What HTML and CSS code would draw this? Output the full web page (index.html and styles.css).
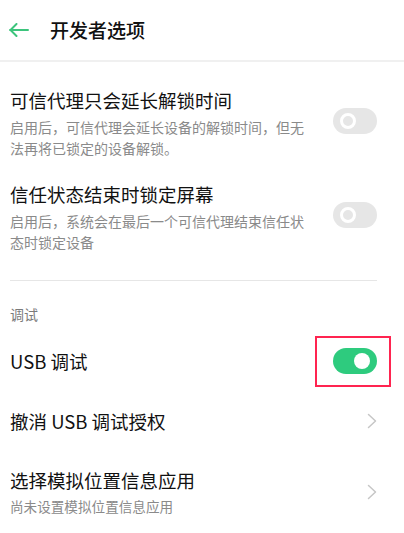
FILE: index.html
```html
<!DOCTYPE html>
<html lang="zh-CN">
<head>
<meta charset="utf-8">
<link rel="stylesheet" href="styles.css">
</head>
<body>
<header class="header">
  <svg class="back" width="20" height="14" viewBox="0 0 20 14"><path d="M1 7H19M7.5 1L1.5 7L7.5 13" fill="none" stroke="#3cc47c" stroke-width="2" stroke-linecap="round" stroke-linejoin="round"/></svg>
  <h1 class="title">开发者选项</h1>
</header>
<main class="list">
  <div class="item">
    <div class="text">
      <div class="item-title">可信代理只会延长解锁时间</div>
      <div class="item-sub">启用后，可信代理会延长设备的解锁时间，但无法再将已锁定的设备解锁。</div>
    </div>
    <div class="toggle off top"><span class="knob"></span></div>
  </div>
  <div class="item">
    <div class="text">
      <div class="item-title">信任状态结束时锁定屏幕</div>
      <div class="item-sub">启用后，系统会在最后一个可信代理结束信任状态时锁定设备</div>
    </div>
    <div class="toggle off top"><span class="knob"></span></div>
  </div>
  <div class="divider"></div>
  <div class="sec-label">调试</div>
  <div class="row">
    <div class="item-title">USB 调试</div>
    <div class="highlight">
      <div class="toggle on"><span class="knob"></span></div>
    </div>
  </div>
  <div class="row">
    <div class="item-title">撤消 USB 调试授权</div>
    <svg class="chev" width="10" height="16" viewBox="0 0 10 16"><path d="M1.5 1.5L8.5 8L1.5 14.5" fill="none" stroke="#c6c6c6" stroke-width="1.5" stroke-linecap="round" stroke-linejoin="round"/></svg>
  </div>
  <div class="item last">
    <div class="text">
      <div class="item-title">选择模拟位置信息应用</div>
      <div class="item-sub small">尚未设置模拟位置信息应用</div>
    </div>
    <svg class="chev" width="10" height="16" viewBox="0 0 10 16"><path d="M1.5 1.5L8.5 8L1.5 14.5" fill="none" stroke="#c6c6c6" stroke-width="1.5" stroke-linecap="round" stroke-linejoin="round"/></svg>
  </div>
</main>
</body>
</html>
```
FILE: styles.css
```css
* { box-sizing: border-box; }
html, body { margin: 0; padding: 0; background: #fff; }
body {
  font-family: "Noto Sans CJK SC", "Noto Sans", sans-serif;
  color: #111;
  width: 404px;
  height: 533px;
  overflow: hidden;
}
.header {
  height: 62px;
  display: flex;
  align-items: center;
  padding: 0 0 1px 9px;
  border-bottom: 2px solid #f0f0f0;
}
.back { display: block; flex: none; }
.title {
  margin: 0 0 0 21px;
  font-size: 19px;
  font-weight: 500;
  line-height: 24px;
  color: #111;
}
.list { padding-top: 14px; }
.item {
  display: flex;
  justify-content: space-between;
  padding: 12px 27px 12px 10px;
}
.text { max-width: 300px; }
.item-title {
  font-size: 18.5px;
  line-height: 24px;
  color: #111;
}
.item-sub {
  margin-top: 5px;
  font-size: 14px;
  line-height: 20.5px;
  color: #8a8a8a;
}
.item-sub.small { margin-top: 4px; font-size: 13.6px; line-height: 20px; }
.toggle {
  width: 44px;
  height: 26px;
  border-radius: 13px;
  display: flex;
  align-items: center;
  flex: none;
}
.toggle.top { margin-top: 20px; }
.toggle.off { background: #e6e6e6; padding-left: 7px; }
.toggle.off .knob {
  width: 16px;
  height: 16px;
  border-radius: 50%;
  border: 3.5px solid #fff;
  background: #e6e6e6;
}
.toggle.on { background: #2ecb7e; justify-content: flex-end; padding-right: 7px; }
.toggle.on .knob {
  width: 16px;
  height: 16px;
  border-radius: 50%;
  background: #fff;
}
.divider {
  height: 1px;
  background: #e6e6e6;
  margin: 16px 27px 0 10px;
}
.sec-label {
  margin-top: 23px;
  margin-bottom: 7px;
  padding-left: 10px;
  font-size: 14px;
  line-height: 20px;
  color: #7a7a7a;
}
.row {
  height: 60px;
  display: flex;
  align-items: center;
  justify-content: space-between;
  padding: 0 27px 0 10px;
}
.highlight { position: relative; }
.highlight::after {
  content: "";
  position: absolute;
  left: -18px;
  right: -14px;
  top: -12px;
  bottom: -13px;
  border: 2.5px solid #ff2450;
}
.item.last { padding-top: 17px; align-items: center; }
.chev { display: block; flex: none; }
```
